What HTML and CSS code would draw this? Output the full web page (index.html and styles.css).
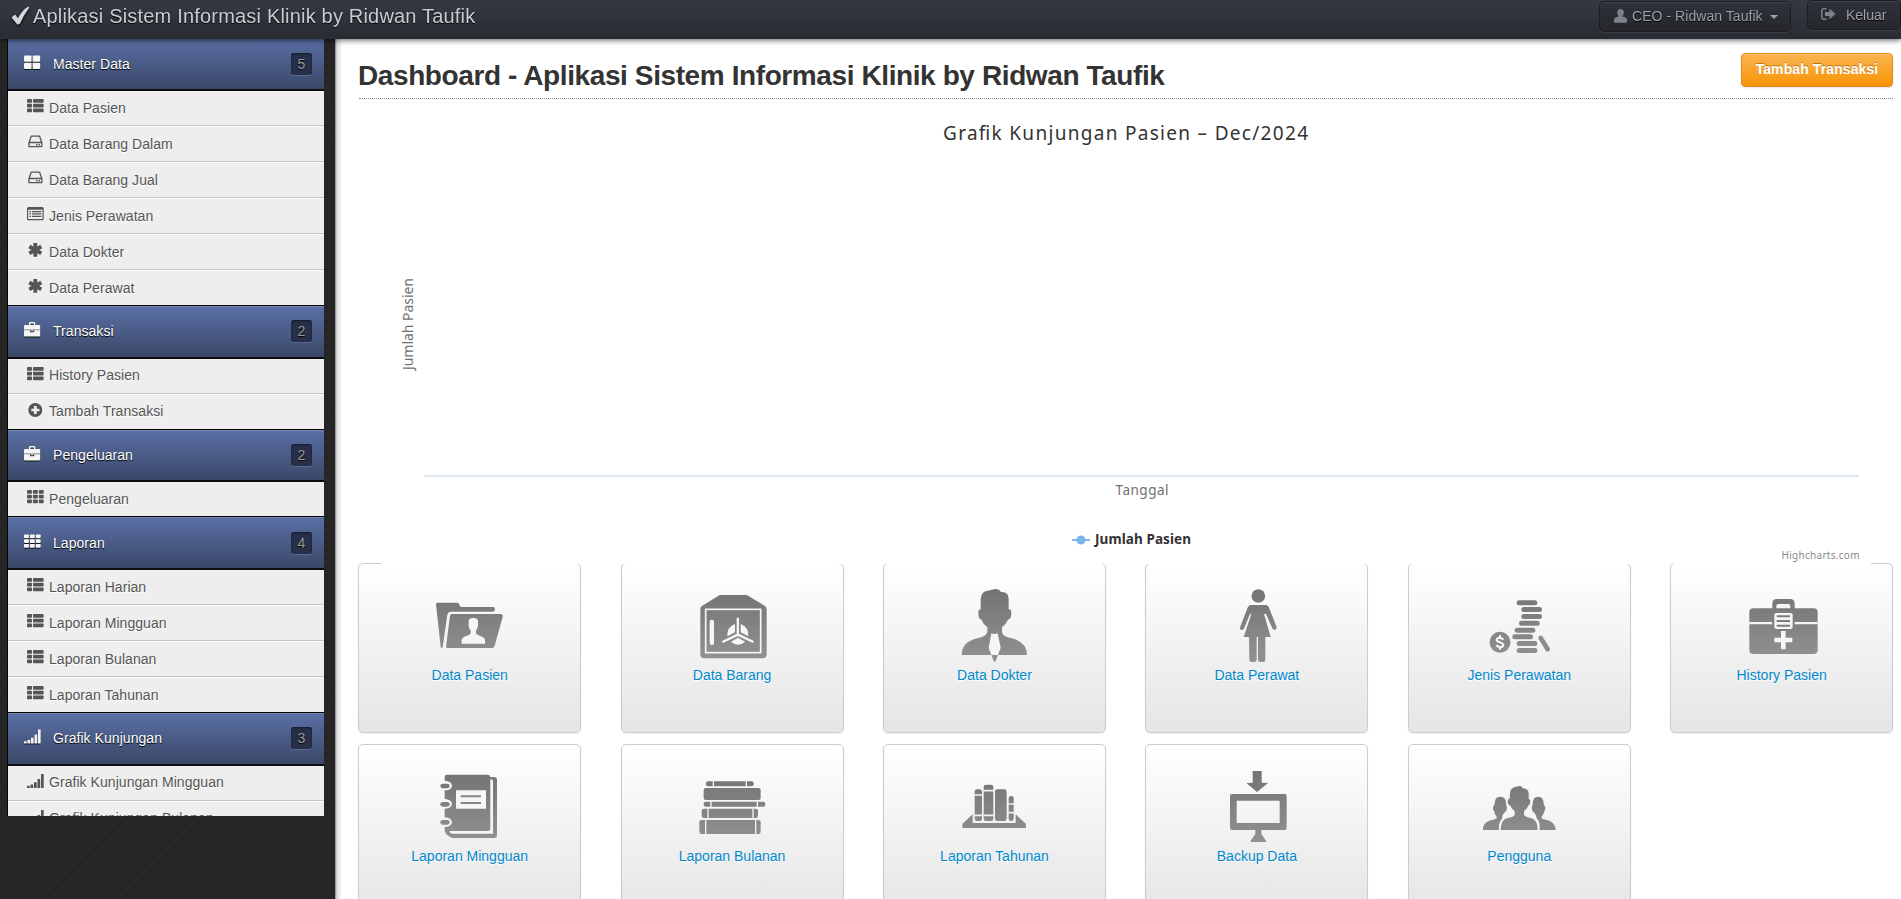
FILE: index.html
```html
<!DOCTYPE html>
<html lang="id">
<head>
<meta charset="utf-8">
<title>Dashboard - Aplikasi Sistem Informasi Klinik</title>
<link rel="stylesheet" href="styles.css">
</head>
<body>
<svg class="defs" width="0" height="0" aria-hidden="true">
  <defs>
    <linearGradient id="g1" gradientUnits="userSpaceOnUse" x1="0" y1="150" x2="0" y2="350"><stop offset="0" stop-color="#747474"/><stop offset="1" stop-color="#909090"/></linearGradient>
    <linearGradient id="g2" gradientUnits="userSpaceOnUse" x1="0" y1="130" x2="0" y2="325"><stop offset="0" stop-color="#747474"/><stop offset="1" stop-color="#909090"/></linearGradient>
    <symbol id="th-large" viewBox="0 0 17 14"><rect x="0" y="0" width="7.6" height="6.2" rx="1"/><rect x="8.6" y="0" width="7.6" height="6.2" rx="1"/><rect x="0" y="7.2" width="7.6" height="6.2" rx="1"/><rect x="8.6" y="7.2" width="7.6" height="6.2" rx="1"/></symbol>
    <symbol id="th-list" viewBox="0 0 17 14"><rect width="5" height="3.8" rx=".8"/><rect x="6" width="10.6" height="3.8" rx=".8"/><rect y="4.8" width="5" height="3.8" rx=".8"/><rect x="6" y="4.8" width="10.6" height="3.8" rx=".8"/><rect y="9.5" width="5" height="3.8" rx=".8"/><rect x="6" y="9.5" width="10.6" height="3.8" rx=".8"/></symbol>
    <symbol id="th" viewBox="0 0 17 14"><rect width="4.9" height="3.8" rx=".8"/><rect x="5.9" width="4.9" height="3.8" rx=".8"/><rect x="11.8" width="4.9" height="3.8" rx=".8"/><rect y="4.8" width="4.9" height="3.8" rx=".8"/><rect x="5.9" y="4.8" width="4.9" height="3.8" rx=".8"/><rect x="11.8" y="4.8" width="4.9" height="3.8" rx=".8"/><rect y="9.5" width="4.9" height="3.8" rx=".8"/><rect x="5.9" y="9.5" width="4.9" height="3.8" rx=".8"/><rect x="11.8" y="9.5" width="4.9" height="3.8" rx=".8"/></symbol>
    <symbol id="hdd" viewBox="0 0 17 14"><path d="M4.2 1.2h8.4l2.2 6.3v4.2H2V7.500zM2 7.500h12.800" fill="none" stroke="currentColor" stroke-width="1.300" stroke-linejoin="round"/><path d="M9 9h1.500v1.500H9zM11.500 9H13v1.500h-1.500z"/></symbol>
    <symbol id="list-alt" viewBox="0 0 17 14"><path d="M1.500 0h13.700a1.500 1.500 0 0 1 1.500 1.500v10.300a1.500 1.500 0 0 1-1.500 1.500H1.500A1.500 1.500 0 0 1 0 11.800V1.500A1.500 1.500 0 0 1 1.500 0zM1.200 2.800v9.300h14.300V2.800zM2.500 4h1.500v1.300H2.500zM5 4h9.300v1.300H5zM2.500 6.300h1.500v1.300H2.500zM5 6.300h9.300v1.300H5zM2.500 8.700h1.500V10H2.500zM5 8.700h9.300V10H5z" fill-rule="evenodd"/></symbol>
    <symbol id="asterisk" viewBox="0 0 17 14"><path d="M8.300 0v13.800M2.300 3.500l12 6.800M2.300 10.300l12-6.800" stroke="currentColor" stroke-width="3.800" fill="none"/></symbol>
    <symbol id="plus-sign" viewBox="0 0 17 14"><path d="M8.300 0a7 7 0 1 0 0 14a7 7 0 1 0 0-14zM7 3h2.700v2.700h2.700v2.600H9.700V11H7V8.300H4.300V5.700H7z" fill-rule="evenodd"/></symbol>
    <symbol id="briefcase" viewBox="0 0 17 15"><path d="M5 3V1.200Q5 0 6.200 0h3.900q1.200 0 1.200 1.200V3h3.700q1.200 0 1.200 1.200v3.100H0V4.200Q0 3 1.200 3zM6.500 3h3.300V1.500H6.500z" fill-rule="evenodd"/><path d="M0 7h16.200v1.500H0z" opacity=".6"/><path d="M0 8.300h6v1.900h4.200V8.300h6v5.400q0 .8-.8.800H.8q-.8 0-.8-.8z"/><path d="M7.300 8h1.600v1.200H7.300z"/></symbol>
    <symbol id="signal" viewBox="0 0 17 14"><path d="M0 11.800h2.700V14H0zM3.500 10.500h2.700V14H3.500zM7 8.300h2.700V14H7zM10.500 5h2.700v9h-2.700zM14 0h2.700v14H14z"/></symbol>
  </defs>
</svg>

<header class="navbar">
  <div class="brand">
    <svg class="check" viewBox="0 0 19 19"><path d="M.5 11.500L4 8.500l3 3.800Q11 4.300 17.500.3L18 2Q12.500 9.500 9 17.500L6.500 18.800z"/></svg>
    <span>Aplikasi Sistem Informasi Klinik by Ridwan Taufik</span>
  </div>
  <a class="navbtn user">
    <svg width="13" height="14" viewBox="0 0 13 14"><path d="M6.500 0Q9.800.2 9.800 3.600Q9.600 6.300 8.300 7.500Q13 8.500 13 10.500v2q0 1.200-1.200 1.200H1.200Q0 13.700 0 12.500v-2Q0 8.500 4.700 7.500Q3.400 6.300 3.200 3.600Q3.200.2 6.500 0z"/></svg>
    <span>CEO - Ridwan Taufik</span><i class="caret"></i>
  </a>
  <a class="navbtn logout">
    <svg width="15" height="12" viewBox="0 0 15 12"><path d="M5.500.8H3Q.8.800.8 3v6Q.8 11.200 3 11.200h2.500" fill="none" stroke="currentColor" stroke-width="1.500"/><path d="M4 4h4.500V.8L14.500 6L8.500 11.200V8H4z"/></svg>
    <span>Keluar</span>
  </a>
</header>

<div class="layout">
  <nav class="sidebar">
    <div class="menu">
      <div class="group"><svg><use href="#th-large"/></svg><span>Master Data</span><b>5</b></div>
      <ul>
        <li><svg><use href="#th-list"/></svg>Data Pasien</li>
        <li><svg><use href="#hdd"/></svg>Data Barang Dalam</li>
        <li><svg><use href="#hdd"/></svg>Data Barang Jual</li>
        <li><svg><use href="#list-alt"/></svg>Jenis Perawatan</li>
        <li><svg><use href="#asterisk"/></svg>Data Dokter</li>
        <li><svg><use href="#asterisk"/></svg>Data Perawat</li>
      </ul>
      <div class="group"><svg><use href="#briefcase"/></svg><span>Transaksi</span><b>2</b></div>
      <ul>
        <li><svg><use href="#th-list"/></svg>History Pasien</li>
        <li><svg><use href="#plus-sign"/></svg>Tambah Transaksi</li>
      </ul>
      <div class="group"><svg><use href="#briefcase"/></svg><span>Pengeluaran</span><b>2</b></div>
      <ul>
        <li><svg><use href="#th"/></svg>Pengeluaran</li>
      </ul>
      <div class="group"><svg><use href="#th"/></svg><span>Laporan</span><b>4</b></div>
      <ul>
        <li><svg><use href="#th-list"/></svg>Laporan Harian</li>
        <li><svg><use href="#th-list"/></svg>Laporan Mingguan</li>
        <li><svg><use href="#th-list"/></svg>Laporan Bulanan</li>
        <li><svg><use href="#th-list"/></svg>Laporan Tahunan</li>
      </ul>
      <div class="group"><svg><use href="#signal"/></svg><span>Grafik Kunjungan</span><b>3</b></div>
      <ul>
        <li><svg><use href="#signal"/></svg>Grafik Kunjungan Mingguan</li>
        <li><svg><use href="#signal"/></svg>Grafik Kunjungan Bulanan</li>
      </ul>
    </div>
  </nav>

  <main class="content">
    <div class="page-head">
      <h1>Dashboard - Aplikasi Sistem Informasi Klinik by Ridwan Taufik</h1>
      <a class="btn-warning">Tambah Transaksi</a>
    </div>

    <svg class="chart" viewBox="381 99 1490 465">
      <rect x="381" y="99" width="1490" height="465" fill="#fff"/>
      <text x="943" y="140" font-size="19" fill="#333" textLength="365">Grafik Kunjungan Pasien – Dec/2024</text>
      <text transform="translate(413 370) rotate(-90)" font-size="14" fill="#707070" textLength="92">Jumlah Pasien</text>
      <rect x="424" y="475" width="1435" height="2" fill="#dfe7ef"/>
      <text x="1115.500" y="495" font-size="13.500" fill="#707070" textLength="53">Tanggal</text>
      <path d="M1072 540h18" stroke="#7cb5ec" stroke-width="2"/>
      <circle cx="1081" cy="540" r="4.500" fill="#7cb5ec"/>
      <text x="1095" y="544" font-size="13.500" font-weight="bold" fill="#333" textLength="96">Jumlah Pasien</text>
      <text x="1781.500" y="559" font-size="10" fill="#888" textLength="78">Highcharts.com</text>
    </svg>

    <div class="cards">
      <a class="card">
        <svg viewBox="269 120 240 252"><g fill="url(#g1)"><path d="M291 188h60q5 0 6 6t6 7h96q5 1 5 7t-5 7H333q-10 0-12 9L307 322q-3 4-6-1L287 193q0-5 4-5z"/><path d="M335 222H482q7 2 5 9L463 317q-2 7-8 7H321q-4 0-4-4l12-93q1-5 6-5z"/></g><path fill="#f6f6f6" d="M399 234q14 0 14 9v15q-1 8-6 14v8q2 5 15 9q12 4 12 12v10H364v-10q0-8 12-12q14-4 15-9v-8q-6-6-6-14v-15q0-9 14-9z"/></svg>
        <span>Data Pasien</span></a>
      <a class="card">
        <svg viewBox="1057 120 240 252"><path fill="url(#g1)" d="M1140 165h81l54 32q6 4 6 10v136q0 12-12 12H1094q-12 0-12-12V207q0-6 6-10z"/><rect x="1098" y="208" width="165" height="130" fill="none" stroke="#f6f6f6" stroke-width="5"/><rect x="1110" y="239" width="13" height="76" rx="6" fill="#f6f6f6"/><path fill="#f6f6f6" d="M1186 252v25l-23 12q-2-27 23-37zM1203 252v25l23 12q2-27-23-37zM1195 293l21 12q-20 19-42 0z"/><path d="M1194.500 233v51l-46 22M1194.500 284l47 22" fill="none" stroke="#f6f6f6" stroke-width="7"/></svg>
        <span>Data Barang</span></a>
      <a class="card">
        <svg viewBox="283 120 240 252"><path fill="url(#g1)" d="M363 208V180q0-26 21-28l22-5q12-1 18 9l9 1q13 2 14 20v31q8 0 8 10q0 19-10 21q-7 15-18 23v15q2 13 29 18q46 11 46 50H306q0-39 47-50q26-5 30-18v-15q-12-9-18-23q-9-2-9-21q0-10 7-10z"/><path fill="#f6f6f6" d="M395 280q9 4 19 0l9 44l-8 21h-20l-8-21z"/><path fill="url(#g1)" d="M395 345h20l-7 18q-3 5-6 0z"/></svg>
        <span>Data Dokter</span></a>
      <a class="card">
        <svg viewBox="1069 120 240 252"><g fill="url(#g1)"><circle cx="1193" cy="168" r="20.500"/><path d="M1168 195h50l6 5 24 62q0 7-7 8q-4 0-6-5l-19-43h-6l20 69H1149l23-69h-4l-18 44q-3 5-7 4q-6-1-5-8l24-62z"/><path d="M1165 289h23v70q0 7-7 7h-8q-7 0-7-7zM1192 289h22v70q0 7-7 7h-8q-7 0-7-7z"/></g></svg>
        <span>Data Perawat</span></a>
      <a class="card">
        <svg viewBox="298 120 240 252"><g fill="url(#g1)"><rect x="411" y="181" width="62" height="15" rx="7.500"/><rect x="425" y="201" width="62" height="15" rx="7.500"/><rect x="425" y="222" width="62" height="15" rx="7.500"/><rect x="418" y="242" width="62" height="15" rx="7.500"/><rect x="405" y="263" width="62" height="15" rx="7.500"/><rect x="398" y="283" width="62" height="15" rx="7.500"/><rect x="411" y="303" width="62" height="15" rx="7.500"/><rect x="411" y="324" width="62" height="15" rx="7.500"/><circle cx="361" cy="307" r="31.500"/></g><path d="M483 294L504 328" stroke="#8c8c8c" stroke-width="14" stroke-linecap="round"/><path d="M361 285v8M361 321v8M371 299q-4-6-12-6q-8 1-8 7q1 5 10 7q10 3 10 8q-1 6-10 6q-8 0-11-6" fill="none" stroke="#f6f6f6" stroke-width="6"/></svg>
        <span>Jenis Perawatan</span></a>
      <a class="card">
        <svg viewBox="1084 120 240 252"><path fill="url(#g1)" d="M1175 205v-14q0-14 14-14h39q14 0 14 14v14h57q12 0 12 12v113q0 12-12 12H1118q-12 0-12-12V217q0-12 12-12z"/><path fill="#f6f6f6" d="M1187 205v-7q0-6 6-6h30q6 0 6 6v7zM1106 246h205v7H1106z"/><rect x="1174" y="213" width="68" height="58" rx="8" fill="#808080"/><rect x="1181" y="219" width="55" height="48" rx="6" fill="#f6f6f6"/><path d="M1188 229h40M1188 243h40M1188 257h40" stroke="#7c7c7c" stroke-width="6"/><path d="M1208 273v55M1181 300h54" stroke="#f6f6f6" stroke-width="14"/></svg>
        <span>History Pasien</span></a>
      <a class="card">
        <svg viewBox="269 93 240 252"><path fill="url(#g2)" d="M313 146V140q0-6 7-6H441q8 0 9 7h11q9 0 9 9v165q0 9-9 9H335l-16-10q-6-8-6-16v-7q20 0 22-14q-1-14-22-15v-26q20 0 22-14q-1-14-22-15v-26q20 0 22-14q-1-14-22-15z"/><path fill="#f6f6f6" d="M450 147q8 0 8 8v156H337q-8 0-9-8H442q8 0 8-8zM347 181h90v55H347z"/><path d="M361 199h61M361 219h61" stroke="#858585" stroke-width="6"/><g fill="url(#g2)"><rect x="300" y="161" width="28" height="14" rx="7"/><rect x="300" y="216" width="28" height="14" rx="7"/><rect x="300" y="270" width="28" height="14" rx="7"/></g></svg>
        <span>Laporan Mingguan</span></a>
      <a class="card">
        <svg viewBox="1057 93 240 252"><g fill="url(#g2)"><rect x="1099" y="154" width="143" height="15" rx="6"/><rect x="1092" y="174" width="171" height="36" rx="6"/><rect x="1092" y="215" width="185" height="15" rx="6"/><rect x="1086" y="236" width="169" height="28" rx="7"/><rect x="1079" y="270" width="184" height="42" rx="7"/></g><path d="M1121 153v17M1220 153v17M1114 214v17M1253 214v17M1105 235v30M1240 235v30M1098 269v44M1248 269v44" stroke="#f2f2f2" stroke-width="4"/></svg>
        <span>Laporan Bulanan</span></a>
      <a class="card">
        <svg viewBox="283 93 240 252"><g fill="url(#g2)"><rect x="345" y="178" width="22" height="95" rx="7"/><rect x="372" y="164" width="29" height="109" rx="7"/><rect x="406" y="178" width="35" height="95" rx="7"/><rect x="447" y="198" width="15" height="75" rx="7"/><path d="M339 253v26h129v-26l29 27q2 2 2 6v5q0 3-3 3H312q-4 0-4-4v-4q0-4 3-7z"/></g><path d="M344 195h24M371 182h31M344 256h24M371 256h31M446 222h17M446 248h17" stroke="#f2f2f2" stroke-width="5"/></svg>
        <span>Laporan Tahunan</span></a>
      <a class="card">
        <svg viewBox="1069 93 240 252"><g fill="url(#g2)"><path d="M1176 123h27v35l19 1l-33 27l-32-27l19-1zM1184 300h18v12l14 20v4h-46v-4l14-20z"/><path fill-rule="evenodd" d="M1114 192h158q6 0 6 6v96q0 6-6 6h-158q-6 0-6-6v-96q0-6 6-6zM1128 212v67h129v-67z"/></g></svg>
        <span>Backup Data</span></a>
      <a class="card">
        <svg viewBox="298 93 240 252"><g fill="url(#g2)"><path d="M345 222q0-22 16-22q19 0 18 22l3 11q-1 11-6 13q-9 8-9 21q-8 6-9 17v16H310q-1-22 23-29q16-3 18-7v-4q-7-8-7-15q-5-3-4-13z"/><path d="M492 222q0-22-16-22q-17 0-17 22l-3 11q1 11 6 13q8 8 9 19q9 8 9 19v16h48q-1-22-23-29q-16-3-19-7v-4q7-8 7-15q5-3 4-13z"/><path stroke="#f3f3f3" stroke-width="9" paint-order="stroke" d="M391 205q-3-29 13-33l16-4q7 0 9 7q17 1 18 15v17q5 1 5 7q0 10-6 13q-5 10-13 16v12q4 6 20 9q21 5 21 36H363q0-31 21-36q18-3 21-9v-12q-8-6-13-16q-8-3-8-13q1-8 7-9z"/></g></svg>
        <span>Pengguna</span></a>
    </div>
  </main>
</div>
</body>
</html>
```

FILE: styles.css
```css
* { box-sizing: border-box; }
body {
  margin: 0;
  height: 899px;
  overflow: hidden;
  font: 14px/20px "Liberation Sans", Arial, sans-serif;
  color: #333;
  background: #252525;
}
.defs { display: block; position: absolute; }

/* top bar */
.navbar {
  position: fixed;
  top: 0; left: 0; right: 0;
  z-index: 5;
  height: 39px;
  display: flex;
  align-items: flex-start;
  background: linear-gradient(#363944, #292b32);
  box-shadow: 0 1px 6px rgba(0, 0, 0, .65);
}
.brand {
  display: flex;
  flex: 1;
  padding: 6px 0 0 11px;
  gap: 3px;
  font-size: 20px;
  letter-spacing: .19px;
  color: #c9ccd1;
  text-shadow: 0 1px 1px #000;
}
.check { width: 19px; height: 19px; fill: #d6d7da; filter: drop-shadow(0 1px 1px #000); }
.navbtn {
  display: flex;
  align-items: center;
  color: #9ea1ab;
  background: linear-gradient(#30323a, #25272c);
  border: 1px solid #1c1d21;
  border-radius: 5px;
  box-shadow: 0 1px 0 #3b3e48, inset 0 1px 0 #3f424d;
  text-shadow: 0 1px 0 #000;
}
.navbtn svg { fill: #7d818c; color: #7d818c; }
.navbtn span { margin-top: -1px; }
.user { width: 192px; height: 31px; margin-top: 1px; padding-left: 14px; gap: 5px; letter-spacing: .05px; }
.user svg { margin-top: -2px; }
.caret { margin-left: 2px; border: 4px solid transparent; border-top-color: #9ea1ab; border-bottom: 0; }
.logout { width: 94px; height: 30px; margin-left: 16px; padding-left: 13px; gap: 10px; }
.logout svg { margin-top: -2px; }

.layout { display: flex; height: 899px; }

/* side menu */
.sidebar {
  width: 335px;
  padding: 37.333px 11px 0 7px;
  background: repeating-linear-gradient(135deg, #242424 0 3px, #272727 3px 6px);
}
.menu { height: 778.667px; overflow: hidden; border-left: 1px solid #050505; background: #eee; letter-spacing: .05px; }
.group {
  height: 53.667px;
  display: flex;
  align-items: center;
  padding: 0 12px 0 16px;
  color: #fff;
  text-shadow: 0 1px 1px #000;
  background: linear-gradient(#5a70a6, #3a4767);
  border-top: 1px solid #050505;
  border-bottom: 2px solid #0c0c10;
  box-shadow: inset 0 1px 0 #7388b5;
}
.group svg { width: 17px; height: 15px; margin: -3px 12px 0 0; fill: #f5f5f5; filter: drop-shadow(0 1px 0 #111); }
.group span { flex: 1; }
.group b {
  width: 21px;
  height: 22px;
  line-height: 22px;
  text-align: center;
  font-weight: normal;
  color: #999;
  background: #283049;
  border-radius: 3px;
  box-shadow: inset 0 1px 2px #151a2a, 0 1px 0 #5b6b93;
}
.menu ul { margin: 0; padding: 0; list-style: none; color: #555; text-shadow: 0 1px 0 #fff; }
.menu li { height: 36px; display: flex; align-items: center; padding: .3px 0 0 19px; border-top: 1px solid #c5c5c5; box-shadow: inset 0 1px 0 #fafafa; }
.menu li:first-child { height: 34px; padding: 0 0 .7px 19px; border-top: 0; box-shadow: none; }
.menu li svg { width: 17px; height: 14px; margin: -3px 5px 0 0; fill: #555; color: #555; }

/* page */
.content {
  width: 1566px;
  padding: 56px 8px 0 23px;
  background: linear-gradient(90deg, #999 0 1px, #c6c6c6 1px, #e6e6e6 3px, #f1f1f1 5px, #f1f1f1 6px, #fff 6px);
}
.page-head {
  height: 43px;
  display: flex;
  justify-content: space-between;
  align-items: flex-start;
  margin-left: 1px;
  border-bottom: 1px dotted #888;
}
h1 { margin: 0 0 0 -1px; font-size: 28px; line-height: 40px; letter-spacing: -.4px; white-space: nowrap; }
.btn-warning {
  width: 152px;
  height: 34px;
  margin-top: -3px;
  line-height: 31px;
  text-align: center;
  font-weight: bold;
  letter-spacing: .1px;
  color: #fff;
  text-shadow: 0 -1px 0 rgba(0, 0, 0, .3);
  background: linear-gradient(#fbb450, #f89406);
  border: 1px solid #de8a1a;
  border-radius: 4px;
  box-shadow: inset 0 1px 0 rgba(255, 255, 255, .2), 0 1px 2px rgba(0, 0, 0, .1);
}
.chart {
  display: block;
  position: relative;
  width: 1490px;
  height: 465px;
  margin: 0 0 -1px 23px;
  font-family: "Noto Sans", "Open Sans", sans-serif;
}
.cards {
  display: grid;
  grid-template-columns: repeat(6, 223px);
  justify-content: space-between;
  gap: 11px 0;
  margin: 0 -.2px 0 .2px;
}
.card {
  height: 170px;
  display: flex;
  flex-direction: column;
  align-items: center;
  padding-top: 16px;
  color: #08c;
  text-shadow: 0 1px 0 #fff;
  background: linear-gradient(#fff, #e5e5e5);
  border: 1px solid #ccc;
  border-radius: 5px;
  box-shadow: 0 1px 2px rgba(0, 0, 0, .07);
}
.card svg { width: 80px; height: 84px; margin-bottom: 1px; }
```
